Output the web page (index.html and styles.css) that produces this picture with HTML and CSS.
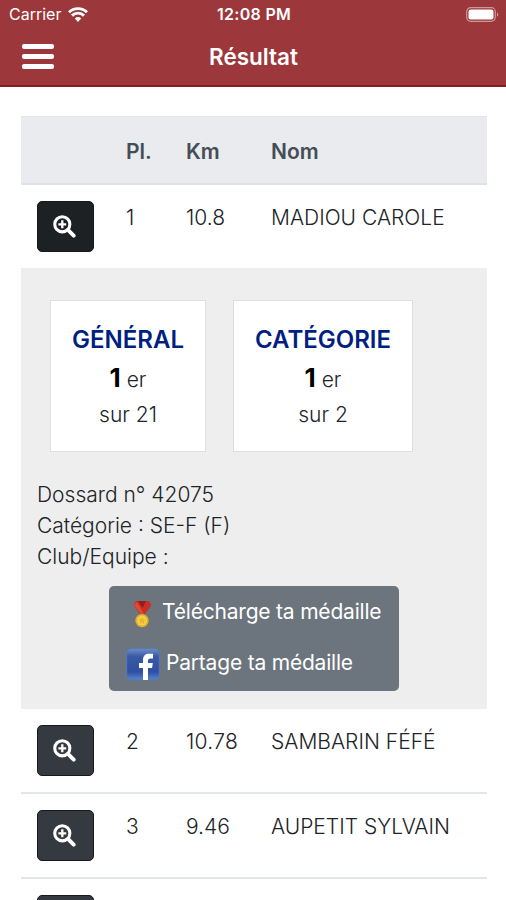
FILE: index.html
```html
<!DOCTYPE html>
<html lang="fr">
<head>
<meta charset="utf-8">
<title>Résultat</title>
<link rel="stylesheet" href="styles.css">
</head>
<body>
<svg class="defs" aria-hidden="true">
  <symbol id="zoom-in" viewBox="0 0 24 24">
    <circle cx="9.7" cy="9.7" r="7.9" fill="none" stroke="#fff" stroke-width="3.2"/>
    <path d="M9.7 5.6v8.2M5.6 9.7h8.2" stroke="#fff" stroke-width="2.4"/>
    <path d="M15.6 15.6l6 6" stroke="#fff" stroke-width="4" stroke-linecap="round"/>
  </symbol>
</svg>
<header class="header">
  <div class="status">
    <div class="carrier"><span>Carrier</span>
      <svg class="wifi" viewBox="0 0 20 15"><path d="M10 15l-3.2-3.5a4.7 4.7 0 0 1 6.4 0z" fill="#fff"/><path d="M4 8.6a8.6 8.6 0 0 1 12 0M1 5.2a13 13 0 0 1 18 0" fill="none" stroke="#fff" stroke-width="2.9"/></svg>
    </div>
    <div class="clock">12:08 PM</div>
    <svg class="battery" viewBox="0 0 33 15"><rect x=".7" y=".7" width="28.6" height="13.6" rx="4" fill="none" stroke="#cd999b" stroke-width="1.2"/><rect x="2.5" y="2.5" width="25" height="10" rx="2.3" fill="#fff"/><path d="M31 5.2q2.6 2.3 0 4.6z" fill="#cd999b"/></svg>
  </div>
  <div class="nav">
    <button class="menu" aria-label="Menu"><i></i><i></i><i></i></button>
    <h1>Résultat</h1>
  </div>
</header>
<main class="results">
  <div class="row head"><span></span><span>Pl.</span><span>Km</span><span>Nom</span></div>
  <div class="row first"><button class="zoom active"><svg><use href="#zoom-in"/></svg></button><span>1</span><span>10.8</span><span>MADIOU CAROLE</span></div>
  <section class="detail">
    <div class="cards">
      <div class="card general"><h2>GÉNÉRAL</h2><p><b>1</b> er</p><p class="total">sur 21</p></div>
      <div class="card category"><h2>CATÉGORIE</h2><p><b>1</b> er</p><p class="total">sur 2</p></div>
    </div>
    <div class="info"><p>Dossard n° 42075</p><p>Catégorie : SE-F (F)</p><p>Club/Equipe :</p></div>
    <div class="share">
      <a class="download"><svg class="medal" viewBox="0 0 20 28"><path d="M4 1h13l2.5 4L13 14H8L1.5 5z" fill="#c92f25"/><path d="M6 1h8l-3.5 7z" fill="#8e211d"/><path d="M2 5l7 9h3L5 2z" fill="#e24a37"/><circle cx="10" cy="20.6" r="6.7" fill="#e3ae27"/><circle cx="10" cy="20.6" r="5" fill="#f5cf4a"/><path d="M10 17l1.1 2.3 2.6.3-1.9 1.8.5 2.6-2.3-1.2L7.7 24l.5-2.6-1.9-1.8 2.6-.3z" fill="#e8b733"/></svg><span>Télécharge ta médaille</span></a>
      <a class="facebook"><svg class="fb" viewBox="0 0 34 33"><defs><linearGradient id="g" x2="0" y2="1"><stop stop-color="#6f8fc8"/><stop offset=".25" stop-color="#395aa5"/><stop offset=".75" stop-color="#2f50a0"/><stop offset="1" stop-color="#5386d2"/></linearGradient></defs><rect x=".7" y=".7" width="32.6" height="31" rx="4.5" fill="url(#g)" stroke="#587ab8" stroke-width="1"/><path d="M17 32V20h-4v-5h4v-3c0-4.5 2.5-6.3 6-6.3h4v4.7h-2.7c-1.6 0-2.3.8-2.3 2.3V15h4.8l-.7 5H22v12z" fill="#fff"/></svg><span>Partage ta médaille</span></a>
    </div>
  </section>
  <div class="row"><button class="zoom"><svg><use href="#zoom-in"/></svg></button><span>2</span><span class="wide">10.78</span><span>SAMBARIN FÉFÉ</span></div>
  <div class="row line"><button class="zoom"><svg><use href="#zoom-in"/></svg></button><span>3</span><span>9.46</span><span>AUPETIT SYLVAIN</span></div>
  <div class="row line last"><button class="zoom"><svg><use href="#zoom-in"/></svg></button></div>
</main>
</body>
</html>
```
FILE: styles.css
```css
* { box-sizing: border-box; }
html, body { height: 900px; overflow: hidden; }
body { margin: 0; background: #fff; color: #202327; font: 330 21px/31px Inter, "Liberation Sans", sans-serif; }
.defs { display: none; }
h1, h2, p { margin: 0; }
button { border: 0; padding: 0; background: none; }
.header { height: 87px; background: #9c373b; border-bottom: 2px solid #8b1a1c; color: #fff; }
.status { display: grid; grid-template-columns: 1fr 100px 1fr; align-items: center; height: 29px; padding: 0 7px 0 9px; font-size: 16px; font-weight: 400; line-height: 29px; }
.carrier { display: flex; gap: 7px; align-items: center; }
.wifi { width: 20px; height: 15px; }
.clock { text-align: center; font-weight: 600; font-size: 16px; letter-spacing: .3px; white-space: nowrap; }
.battery { width: 33px; height: 15px; justify-self: end; }
.nav { display: grid; grid-template-columns: 55px 1fr 54px; align-items: center; height: 56px; }
.menu { display: flex; flex-direction: column; gap: 5px; padding-left: 22px; margin-top: -1px; }
.menu i { width: 32px; height: 5px; border-radius: 2px; background: #fff; }
.nav h1 { text-align: center; font-size: 22.5px; font-weight: 600; line-height: 32px; }
.results { height: 784px; margin: 29px 19px 0 21px; overflow: hidden; }
.row { display: grid; grid-template-columns: 105px 60px 85px 1fr; height: 83px; padding-top: 17px; white-space: nowrap; }
.line { height: 85px; border-top: 2px solid #e3e6e9; }
.last { height: 23px; overflow: hidden; }
.head { height: 69px; padding-top: 19px; background: #e9ebee; border-top: 1px solid #e3e6e9; border-bottom: 2px solid #dee2e6; color: #454d55; font-weight: 600; }
.first { padding-top: 17px; }
.wide { letter-spacing: .3px; }
.zoom { display: grid; place-items: center; width: 57px; height: 51px; margin: -1px 0 0 16px; border: 1px solid #17191c; border-radius: 5px; background: #343a40; }
.zoom.active { background: #1d2124; }
.zoom svg { width: 23px; height: 23px; margin-right: 2px; }
.detail { height: 441px; padding: 32px 16px 0; background: #eee; }
.cards { display: flex; gap: 27px; padding-left: 13px; }
.card { height: 152px; padding-top: 23px; background: #fff; border: 1px solid #dfdfdf; text-align: center; }
.general { width: 156px; }
.category { width: 180px; }
.card h2 { font-size: 24px; line-height: 32px; font-weight: 600; color: #001f82; }
.card p { line-height: 44px; height: 41px; }
.card b { font-size: 26px; font-weight: 700; color: #000; }
.card .total { line-height: 35px; }
.info { padding-top: 27px; }
.share { width: 290px; height: 105px; margin: 14px 0 0 72px; padding-left: 17px; border-radius: 5px; background: #6c757d; color: #fff; font-weight: 400; letter-spacing: -.2px; white-space: nowrap; }
.share a { display: flex; align-items: center; height: 51px; }
.medal { flex: none; width: 20px; height: 28px; margin: 4px 10px 0 6px; }
.fb { flex: none; width: 34px; height: 33px; margin: 3px 6px 0 0; }
```
